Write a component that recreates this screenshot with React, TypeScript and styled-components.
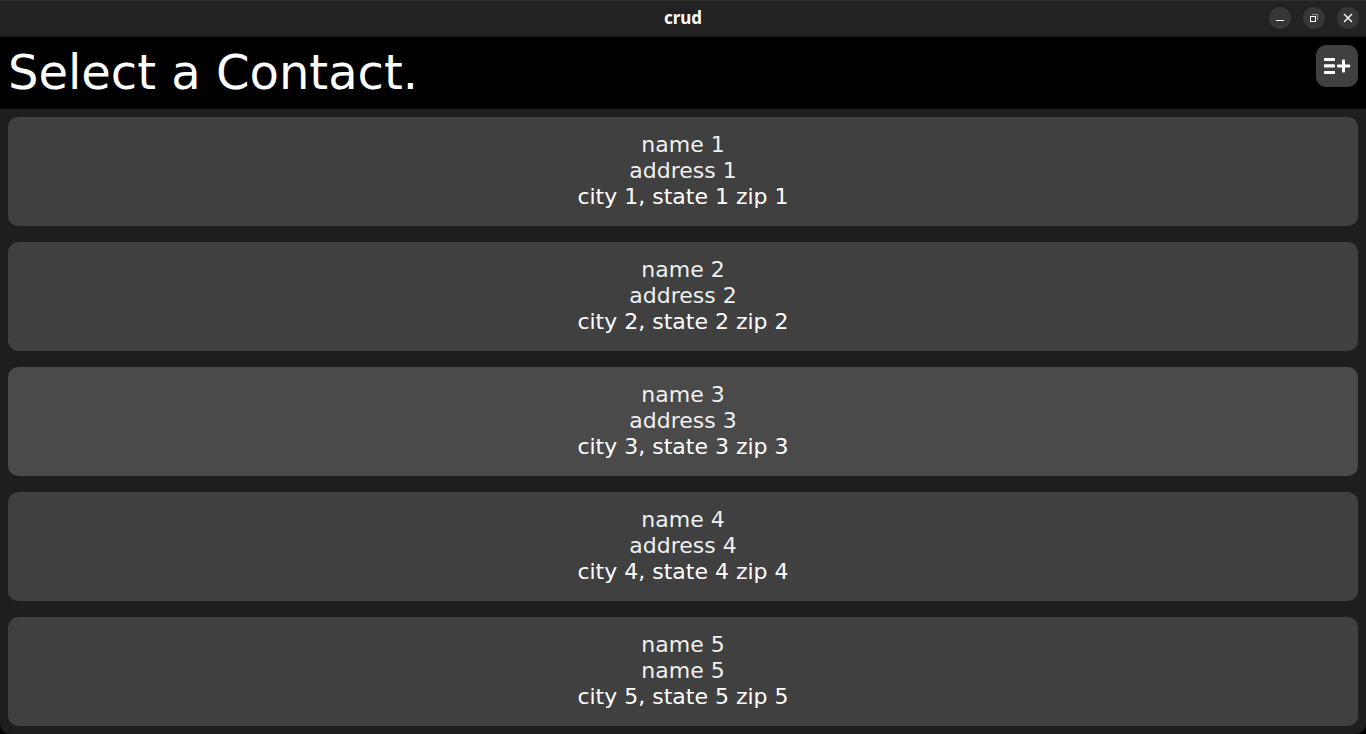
import React from 'react';
import styled, { createGlobalStyle } from 'styled-components';

const GlobalStyle = createGlobalStyle`
  * {
    box-sizing: border-box;
  }
  html {
    background: #000000;
  }
  body {
    margin: 0;
    color: #ffffff;
    font-family: 'DejaVu Sans', sans-serif;
  }
`;

const Window = styled.div`
  min-height: 100vh;
  background: #1e1e1e;
  border-radius: 0 0 10px 10px;
`;

const TitleBar = styled.div`
  display: grid;
  grid-template-columns: 1fr auto 1fr;
  align-items: center;
  height: 37px;
  padding: 0 7px 1px;
  background: #222222;
  border-top: 1px solid #303030;
  border-bottom: 1px solid #1a1a1a;
`;

const WindowTitle = styled.span`
  grid-column: 2;
  font: bold 17px/20px 'Noto Sans', sans-serif;
`;

const WindowControls = styled.div`
  display: flex;
  justify-content: flex-end;
  gap: 12px;
`;

const WindowButton = styled.button`
  display: flex;
  width: 22px;
  height: 22px;
  padding: 0;
  border: 0;
  border-radius: 50%;
  background: #373737;
  color: #ffffff;
`;

const Header = styled.header`
  display: flex;
  align-items: flex-start;
  justify-content: space-between;
  padding: 8px 8px 10px;
  background: #000000;
`;

const Heading = styled.h1`
  margin: 0;
  font-size: 48px;
  font-weight: 400;
  line-height: 54px;
`;

const AddButton = styled.button`
  display: flex;
  width: 42px;
  height: 42px;
  padding: 0;
  border: 0;
  border-radius: 10px;
  background: #404040;
  color: #ffffff;
`;

const ContactList = styled.main`
  display: flex;
  flex-direction: column;
  gap: 16px;
  padding: 8px;
`;

const ContactCard = styled.button<{ $active: boolean }>`
  display: flex;
  flex-direction: column;
  align-items: center;
  padding: 15px 16px 16px;
  border: 0;
  border-radius: 10px;
  background: ${({ $active }) => ($active ? '#4a4a4a' : '#404040')};
  color: #ffffff;
  font-family: inherit;
  font-size: 22px;
  line-height: 26px;
`;

const ContactLine = styled.span<{ $soft?: boolean }>`
  color: ${({ $soft }) => ($soft ? '#f0f0f0' : '#ffffff')};
`;

const contacts = [
  { name: 'name 1', address: 'address 1', place: 'city 1, state 1 zip 1' },
  { name: 'name 2', address: 'address 2', place: 'city 2, state 2 zip 2' },
  { name: 'name 3', address: 'address 3', place: 'city 3, state 3 zip 3' },
  { name: 'name 4', address: 'address 4', place: 'city 4, state 4 zip 4' },
  { name: 'name 5', address: 'name 5', place: 'city 5, state 5 zip 5' },
];

const MinimizeIcon = () => (
  <svg width="22" height="22" viewBox="0 0 22 22" aria-hidden="true">
    <path d="M7 13.5h8" stroke="currentColor" />
  </svg>
);

const RestoreIcon = () => (
  <svg width="22" height="22" viewBox="0 0 22 22" fill="none" aria-hidden="true">
    <path d="M9 7.5h5.5V13" stroke="#8c8c8c" />
    <rect x="7.5" y="9.5" width="5" height="5" stroke="currentColor" />
  </svg>
);

const CloseIcon = () => (
  <svg width="22" height="22" viewBox="0 0 22 22" fill="none" aria-hidden="true">
    <path d="M7 7l8 8M15 7l-8 8" stroke="currentColor" strokeWidth="1.4" />
  </svg>
);

const AddEntryIcon = () => (
  <svg width="42" height="42" viewBox="0 0 42 42" fill="currentColor" aria-hidden="true">
    <rect x="8" y="13" width="11" height="3" rx="0.8" />
    <rect x="8" y="19.3" width="11" height="3.2" rx="0.8" />
    <rect x="8" y="26" width="11" height="3" rx="0.8" />
    <rect x="21" y="19.4" width="13.2" height="3" rx="0.8" />
    <rect x="26" y="14.4" width="3" height="13.2" rx="0.8" />
  </svg>
);

export default function App() {
  return (
    <>
      <GlobalStyle />
      <Window>
        <TitleBar>
          <WindowTitle>crud</WindowTitle>
          <WindowControls>
            <WindowButton type="button" aria-label="Minimize"><MinimizeIcon /></WindowButton>
            <WindowButton type="button" aria-label="Restore"><RestoreIcon /></WindowButton>
            <WindowButton type="button" aria-label="Close"><CloseIcon /></WindowButton>
          </WindowControls>
        </TitleBar>
        <Header>
          <Heading>Select a Contact.</Heading>
          <AddButton type="button" aria-label="Add contact"><AddEntryIcon /></AddButton>
        </Header>
        <ContactList>
          {contacts.map((contact, index) => (
            <ContactCard key={contact.place} type="button" $active={index === 2}>
              <ContactLine $soft>{contact.name}</ContactLine>
              <ContactLine $soft>{contact.address}</ContactLine>
              <ContactLine>{contact.place}</ContactLine>
            </ContactCard>
          ))}
        </ContactList>
      </Window>
    </>
  );
}
